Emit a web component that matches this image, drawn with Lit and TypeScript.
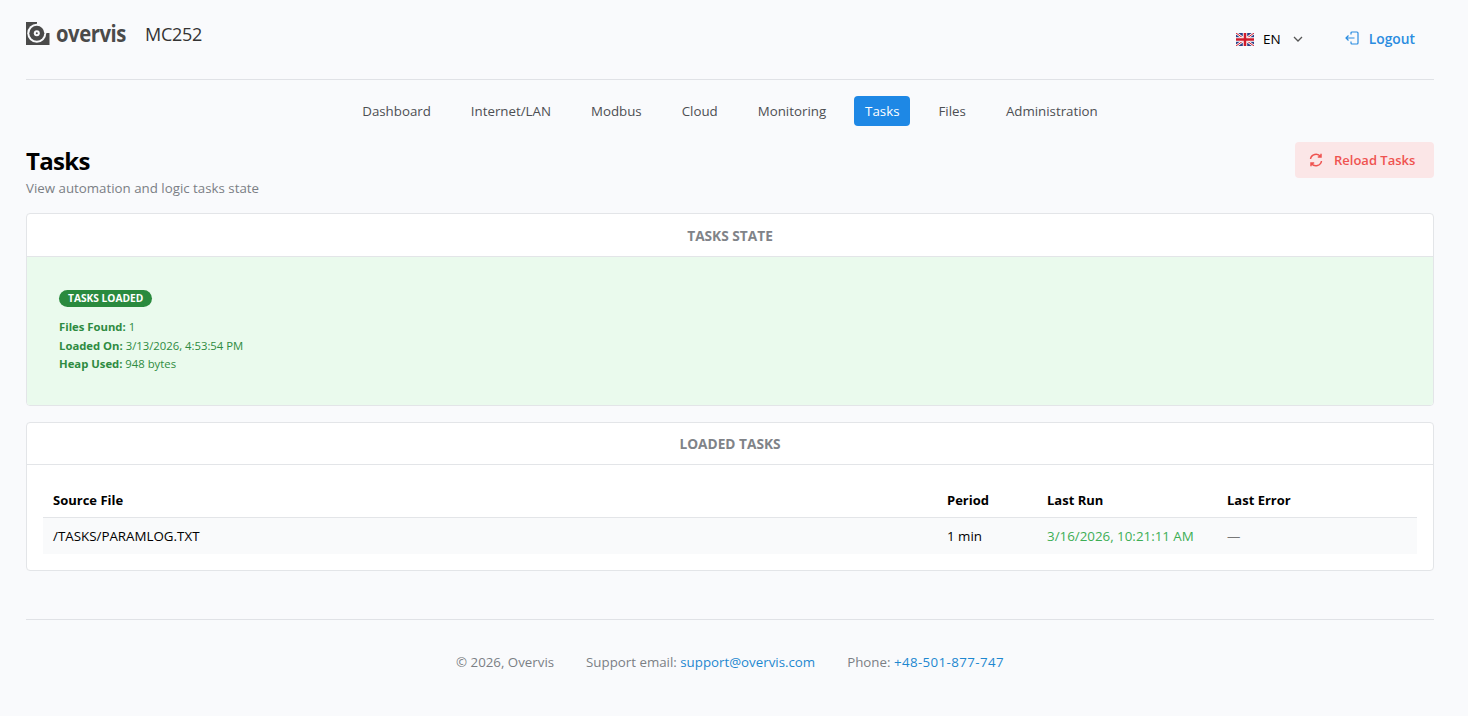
import {LitElement, html, css} from 'lit'
import {customElement} from 'lit/decorators.js'

const navItems = ["Dashboard", "Internet/LAN", "Modbus", "Cloud", "Monitoring", "Tasks", "Files", "Administration"]

@customElement("app-root")
export class AppRoot extends LitElement {
  static styles = css`
    :host {
      display: block;
      height: 716px;
      box-sizing: border-box;
      padding: 0 34px 0 26px;
      background: #f9fafc;
      font-family: "Open Sans", "Noto Sans", sans-serif;
      font-size: 14px;
      color: #000;
      overflow: hidden;
    }
    a { text-decoration: none; color: inherit; }
    .header {
      height: 80px;
      box-sizing: border-box;
      border-bottom: 1px solid #e0e2e6;
      display: flex;
      align-items: flex-start;
    }
    .brand {
      display: flex;
      align-items: center;
      height: 23px;
      margin-top: 22px;
    }
    .logo { width: 24px; height: 23px; display: block; margin-right: 6px; }
    .logo-text {
      font-weight: 700;
      font-size: 23px;
      letter-spacing: -0.5px;
      color: #4a4a4a;
      display: inline-block;
      width: 70px;
      transform: scaleX(.88);
      transform-origin: left center;
      line-height: 23px;
    }
    .device {
      margin-left: 19px;
      font-size: 18px;
      color: #333;
      letter-spacing: -0.3px;
    }
    .right {
      margin-left: auto;
      display: flex;
      align-items: center;
      height: 20px;
      margin-top: 29px;
      padding-right: 19px;
    }
    .flag { width: 18px; height: 13px; display: block; margin-right: 9px; }
    .lang { font-size: 13.5px; margin-right: 11px; }
    .chev { width: 12px; height: 12px; display: block; margin-right: 41px; color: #555; }
    .logout {
      display: flex;
      align-items: center;
      margin-top: -2px;
      color: #2a8ce0;
      font-weight: 600;
      font-size: 13.8px;
    }
    .logout svg { width: 14px; height: 14px; margin-right: 10px; display: block; }
    .nav {
      display: flex;
      justify-content: center;
      gap: 16px;
      margin-top: 16px;
      height: 30px;
    }
    .nav a {
      padding: 0 12px;
      height: 30px;
      line-height: 30px;
      font-size: 13.3px;
      color: #4d4f53;
      border-radius: 4px;
    }
    .nav a.active { background: #1e88e5; color: #fff; padding: 0 11px; }
    .title-row {
      display: flex;
      justify-content: space-between;
      align-items: flex-start;
      margin-top: 16px;
      height: 71px;
    }
    h1 {
      margin: 0;
      font-size: 24px;
      line-height: 38px;
      font-weight: 700;
      letter-spacing: -0.7px;
    }
    .sub { font-size: 13.3px; line-height: 16px; color: #7b7f85; }
    .reload {
      display: flex;
      align-items: center;
      height: 36px;
      width: 139px;
      box-sizing: border-box;
      padding-left: 14px;
      background: #fbe6e7;
      border-radius: 4px;
      color: #ef5350;
      font-weight: 600;
      font-size: 13px;
    }
    .reload svg { width: 14px; height: 14px; margin-right: 11px; display: block; }
    .card {
      background: #fff;
      border: 1px solid #e3e5e8;
      border-radius: 4px;
      overflow: hidden;
    }
    .card + .card { margin-top: 16px; }
    .card-head {
      height: 42px;
      line-height: 44px;
      text-align: center;
      font-size: 13.7px;
      font-weight: 700;
      color: #808388;
      border-bottom: 1px solid #e3e5e8;
    }
    .card-head.short { height: 41px; line-height: 42px; }
    .state {
      background: #eafaed;
      height: 148px;
      box-sizing: border-box;
      padding: 33px 32px;
      color: #2e8b41;
      font-size: 11.3px;
      line-height: 18.6px;
    }
    .pill {
      display: inline-block;
      background: #2a8a3e;
      color: #fff;
      font-size: 10.2px;
      font-weight: 700;
      line-height: 17px;
      height: 17px;
      padding: 0 9px;
      border-radius: 9px;
      margin-bottom: 11px;
      vertical-align: top;
    }
    .state b { font-weight: 700; }
    .table-wrap { padding: 16px; }
    table { width: 100%; border-collapse: collapse; table-layout: fixed; font-size: 13.35px; }
    th {
      text-align: left;
      font-weight: 700;
      font-size: 13px;
      height: 36px;
      box-sizing: border-box;
      padding: 2px 10px 0;
      border-bottom: 1px solid #e3e5e8;
    }
    td { height: 36px; padding: 0 10px; background: #f9fafb; }
    .c-period { width: 100px; }
    .c-run { width: 180px; }
    .c-err { width: 200px; }
    .ok { color: #3dae55; }
    .dash { color: #777; }
    .foot {
      margin-top: 48px;
      border-top: 1px solid #e0e2e6;
      padding-top: 33px;
      display: flex;
      justify-content: center;
      gap: 32px;
      font-size: 13.3px;
      line-height: 18px;
      color: #7b7f85;
    }
    .foot a { color: #1e88d0; }
    .foot a.tel { letter-spacing: .4px; }
  `

  render() {
    return html`
      <div class="header">
        <div class="brand">
          <svg class="logo" viewBox="0 0 24 23">
            <path fill="#4a4a4a" d="M0 0H11V11H23.500V23H0Z"/>
            <circle cx="10.800" cy="11.300" r="9.500" fill="#f9fafc"/>
            <circle cx="10.800" cy="11.300" r="7.500" fill="#4a4a4a"/>
            <circle cx="10.800" cy="11.300" r="3" fill="#f9fafc"/>
            <circle cx="10.800" cy="11.300" r="1" fill="#4a4a4a"/>
          </svg>
          <span class="logo-text">overvis</span>
          <span class="device">MC252</span>
        </div>
        <div class="right">
          <svg class="flag" viewBox="0 0 18 13">
            <rect width="18" height="13" fill="#2b3f86"/>
            <path d="M0 0L18 13M18 0L0 13" stroke="#fff" stroke-width="2.600"/>
            <path d="M0 0L18 13M18 0L0 13" stroke="#cf1b2b" stroke-width="1"/>
            <path d="M9 0V13M0 6.500H18" stroke="#fff" stroke-width="4.400"/>
            <path d="M9 0V13M0 6.500H18" stroke="#cf1b2b" stroke-width="2.600"/>
          </svg>
          <span class="lang">EN</span>
          <svg class="chev" viewBox="0 0 12 12" fill="none" stroke="currentColor" stroke-width="1.300"><path d="M2 4l4 4 4-4"/></svg>
          <a class="logout">
            <svg viewBox="0 0 14 14" fill="none" stroke="currentColor" stroke-width="1.200"><path d="M6 3.500V2a1 1 0 0 1 1-1h5a1 1 0 0 1 1 1v10a1 1 0 0 1-1 1H7a1 1 0 0 1-1-1v-1.500M9.500 7H1M3.500 4.500L1 7l2.500 2.500"/></svg>
            Logout
          </a>
        </div>
      </div>
      <nav class="nav">
        ${navItems.map(n => html`<a class=${n === "Tasks" ? "active" : ""}>${n}</a>`)}
      </nav>
      <div class="title-row">
        <div>
          <h1>Tasks</h1>
          <div class="sub">View automation and logic tasks state</div>
        </div>
        <a class="reload">
          <svg viewBox="0 0 14 14" fill="none" stroke="currentColor" stroke-width="1.500"><path d="M1.500 6A5.600 5.600 0 0 1 11.500 3.500M12.500 8A5.600 5.600 0 0 1 2.500 10.500M12 .800V4H8.800M2 13.200V10H5.200"/></svg>
          Reload Tasks
        </a>
      </div>
      <div class="card">
        <div class="card-head">TASKS STATE</div>
        <div class="state">
          <span class="pill">TASKS LOADED</span><br>
          <div><b>Files Found:</b> 1</div>
          <div><b>Loaded On:</b> 3/13/2026, 4:53:54 PM</div>
          <div><b>Heap Used:</b> 948 bytes</div>
        </div>
      </div>
      <div class="card">
        <div class="card-head short">LOADED TASKS</div>
        <div class="table-wrap">
          <table>
            <colgroup><col><col class="c-period"><col class="c-run"><col class="c-err"></colgroup>
            <thead><tr><th>Source File</th><th>Period</th><th>Last Run</th><th>Last Error</th></tr></thead>
            <tbody><tr>
              <td>/TASKS/PARAMLOG.TXT</td>
              <td>1 min</td>
              <td class="ok">3/16/2026, 10:21:11 AM</td>
              <td class="dash">—</td>
            </tr></tbody>
          </table>
        </div>
      </div>
      <div class="foot">
        <span>© 2026, Overvis</span>
        <span>Support email: <a>support@overvis.com</a></span>
        <span>Phone: <a class="tel">+48-501-877-747</a></span>
      </div>
    `
  }
}
